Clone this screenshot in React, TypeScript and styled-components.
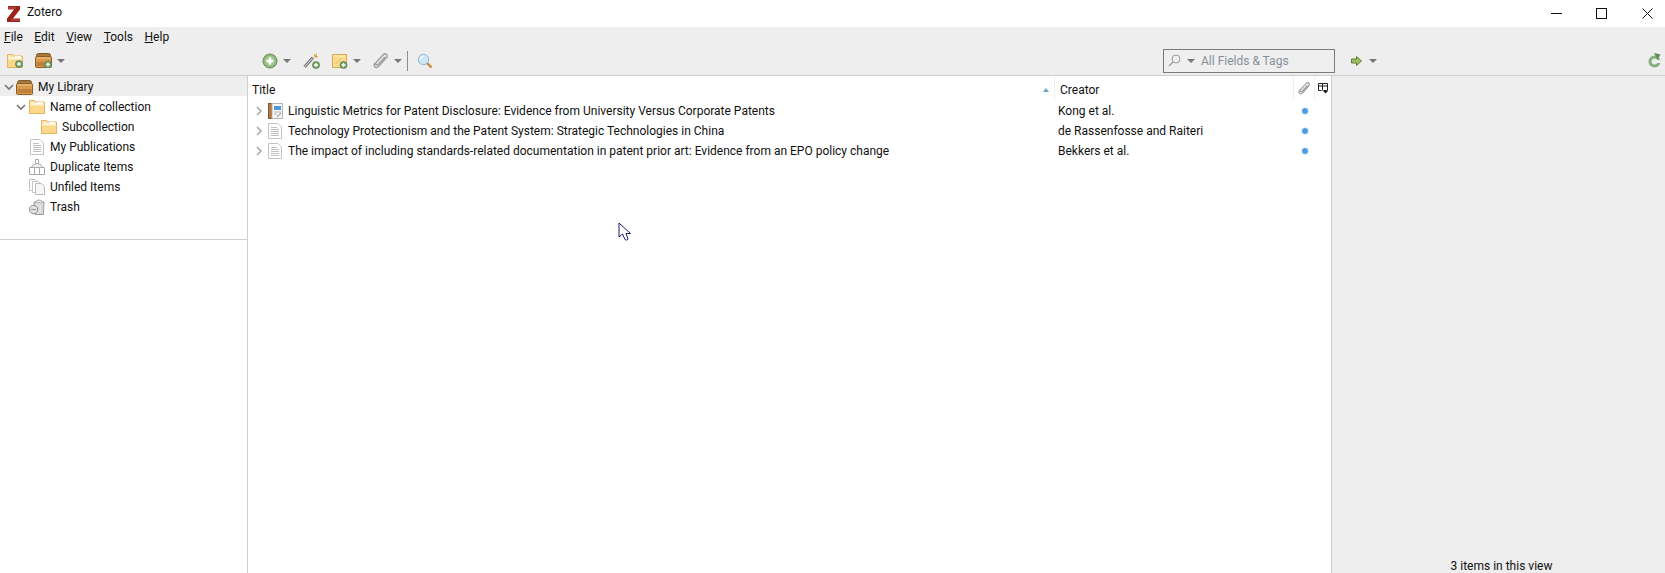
import React from 'react';
import styled, { createGlobalStyle } from 'styled-components';

const GlobalStyle = createGlobalStyle`
  html, body {
    margin: 0;
    padding: 0;
    height: 100%;
    overflow: hidden;
    background: #fff;
  }
  #root {
    height: 100%;
  }
`;

function ZoteroLogo() {
  return (
    <svg width="14" height="16" viewBox="0 0 14 16">
      <path d="M1 0h12v3.4L6 12.6h7V16H0v-3.4L7 3.4H1z" fill="#99231a" />
      <path d="M1 2h8M4 14h9" stroke="#c86a50" strokeWidth="0.8" />
    </svg>
  );
}

function Plus({ x = 10, y = 11 }: { x?: number; y?: number }) {
  return (
    <g>
      <circle cx={x} cy={y} r="3.6" fill="#6f9e5f" stroke="#55804a" strokeWidth="0.6" />
      <path d={`M${x - 2} ${y}h4M${x} ${y - 2}v4`} stroke="#fff" strokeWidth="1.3" />
    </g>
  );
}

function FolderIcon({ plus }: { plus?: boolean }) {
  return (
    <svg width="16" height="14" viewBox="0 0 16 14">
      <path d="M0.5 0.5h5l1 1.500h9v11.500h-15z" fill="#fbe6ae" stroke="#e6b562" />
      <path d="M1.500 4h13M8 2.800h6" stroke="#fff" strokeWidth="1.200" />
      <path d="M1 6h14v7H1z" fill="#fcd98a" />
      {plus && <Plus x={12} y={10} />}
    </svg>
  );
}

function LibraryIcon({ plus }: { plus?: boolean }) {
  return (
    <svg width="17" height="15" viewBox="0 0 17 15">
      <path d="M1.5 2.5q0-2 2-2h10q2 0 2 2v1h-14z" fill="#a87a3c" stroke="#7b5a2a" />
      <rect x="0.5" y="3.5" width="16" height="11" rx="1" fill="#d99a4e" stroke="#8a5f2b" />
      <path d="M1.5 5h14" stroke="#f0c88c" />
      <path d="M1.5 9h14v4h-14z" fill="#c27f3a" />
      {plus && <Plus x={13} y={11.5} />}
    </svg>
  );
}

function DocIcon() {
  return (
    <svg width="14" height="16" viewBox="0 0 14 16">
      <path d="M0.5 0.5h9.5l3.5 3.5v11.5h-13z" fill="#fff" stroke="#c4c4c4" />
      <path d="M3 4.5h6M3 6.5h8M3 8.5h8M3 10.5h8M3 12.5h8" stroke="#c0c0c0" />
    </svg>
  );
}

function BookIcon() {
  return (
    <svg width="15" height="16" viewBox="0 0 15 16">
      <rect x="0.5" y="0.5" width="3.500" height="15" fill="#b9763a" stroke="#7f5a33" />
      <rect x="4" y="0.5" width="10.500" height="15" fill="#f7f7f7" stroke="#b5b5b5" />
      <rect x="6" y="3" width="7" height="4" fill="#4f97dc" />
      <path d="M6 9h7M6 11h3" stroke="#b5b5b5" />
      <path d="M9 14l4-4" stroke="#a8a8a8" strokeWidth="1.200" />
    </svg>
  );
}

function DuplicateIcon() {
  return (
    <svg width="16" height="16" viewBox="0 0 16 16">
      <path d="M6.500 0.500h3v4h-3z" fill="#fff" stroke="#a9a9a9" />
      <path d="M2.500 8q1-3.500 5.500-3.500T13.500 8" fill="#eee" stroke="#a9a9a9" />
      <path d="M0.500 8.500h15v7h-15z" fill="#fff" stroke="#a9a9a9" />
      <path d="M5.500 8.500v7M10.500 8.500v7" stroke="#a9a9a9" />
    </svg>
  );
}

function UnfiledIcon() {
  return (
    <svg width="16" height="16" viewBox="0 0 16 16">
      <path d="M0.500 0.500h6l2 2v9h-8z" fill="#fff" stroke="#c4c4c4" />
      <path d="M3.500 2.500h6l2 2v9h-8z" fill="#fff" stroke="#c4c4c4" />
      <path d="M6.500 4.500h6l3 3v8h-9z" fill="#f6f6f6" stroke="#bcbcbc" />
    </svg>
  );
}

function TrashIcon() {
  return (
    <svg width="16" height="16" viewBox="0 0 16 16">
      <path d="M5 3h10l-0.600 12.500H6z" fill="#d9d9d9" stroke="#9a9a9a" />
      <path d="M6 3q4-4 8.500 0" fill="#eee" stroke="#a9a9a9" />
      <path d="M8 5v9M11 5v9" stroke="#eee" />
      <circle cx="4.500" cy="10.500" r="4.200" fill="#e2e2e2" stroke="#8e8e8e" />
      <path d="M2 10.500h5" stroke="#999" />
    </svg>
  );
}

function AddItemIcon() {
  return (
    <svg width="16" height="16" viewBox="0 0 16 16">
      <circle cx="8" cy="8" r="7" fill="#8db87c" stroke="#678f59" />
      <circle cx="8" cy="8" r="5" fill="#a5c996" />
      <path d="M4.500 8h7M8 4.500v7" stroke="#fff" strokeWidth="2.400" />
    </svg>
  );
}

function WandIcon() {
  return (
    <svg width="17" height="17" viewBox="0 0 17 17">
      <path d="M1.500 15L10 5.500" stroke="#777" strokeWidth="3" />
      <path d="M1.500 15L10 5.500" stroke="#ddd" strokeWidth="1" />
      <path d="M11 1l1 2 2-2-.5 3 2 .5-2.500 1.500-2-1.500z" fill="#e5a43c" />
      <Plus x={13} y={13} />
    </svg>
  );
}

function NoteIcon() {
  return (
    <svg width="16" height="16" viewBox="0 0 16 16">
      <path d="M0.500 1.500h14v9l-4 4h-10z" fill="#fbdc8c" stroke="#d8a94d" />
      <path d="M2 3h11" stroke="#fff0c4" />
      <path d="M3.500 11l6-6" stroke="#e3b659" />
      <Plus x={11.500} y={12} />
    </svg>
  );
}

function ClipIcon({ size = 16 }: { size?: number }) {
  return (
    <svg width={size} height={size} viewBox="0 0 16 16">
      <path
        d="M12 4L5.500 11q-1.500 1.500-2.500 .5t.5-2.500L10 2q2-2 3.500-.5t-.5 3.500L6 13q-2.500 2.500-4 1T2 10"
        fill="none"
        stroke="#a3a3a3"
        strokeWidth="1.600"
      />
    </svg>
  );
}

function LocateIcon() {
  return (
    <svg width="16" height="16" viewBox="0 0 16 16">
      <path d="M10 10l4.500 4.500" stroke="#c98a3a" strokeWidth="2.400" />
      <circle cx="6.500" cy="6.500" r="5.200" fill="#cfe6f5" stroke="#8fb7d2" />
      <path d="M3.500 6q.5-2.500 3-3" stroke="#fff" fill="none" strokeWidth="1.200" />
    </svg>
  );
}

function SearchGlass() {
  return (
    <svg width="13" height="13" viewBox="0 0 13 13">
      <circle cx="8" cy="5" r="4" fill="none" stroke="#9a9a9a" />
      <path d="M5 8L1 12" stroke="#9a9a9a" strokeWidth="1.200" />
    </svg>
  );
}

function GoIcon() {
  return (
    <svg width="11" height="10" viewBox="0 0 11 10">
      <path d="M0.500 3h5V0.500L10.500 5l-5 4.500V7h-5z" fill="#9fbf63" stroke="#5c7d33" />
    </svg>
  );
}

function SyncIcon() {
  return (
    <svg width="13" height="15" viewBox="0 0 13 15">
      <circle cx="6.500" cy="8.500" r="4.500" fill="none" stroke="#86ad7b" strokeWidth="3" />
      <path d="M7 7h6v3H7z" fill="#eeeeee" />
      <path d="M6 0l6.500 1.500-3 5z" fill="#5f8f55" />
    </svg>
  );
}

function ColumnPicker() {
  return (
    <svg width="11" height="11" viewBox="0 0 11 11">
      <path d="M0.500 0.500h9v7h-4M0.500 0.500v7h3M0.500 3h9M4.500 0.500v7" fill="none" stroke="#222" />
      <path d="M5 8h5l-2.500 2.500z" fill="#222" />
    </svg>
  );
}

function Chevron({ open, light }: { open?: boolean; light?: boolean }) {
  return (
    <svg width="10" height="10" viewBox="0 0 10 10">
      <path
        d={open ? 'M1 3l4 4 4-4' : 'M3 1l4 4-4 4'}
        fill="none"
        stroke={light ? '#a8a8a8' : '#777'}
        strokeWidth="1.600"
      />
    </svg>
  );
}

function App() {
  const menus = ['File', 'Edit', 'View', 'Tools', 'Help'];
  const items = [
    {
      title: 'Linguistic Metrics for Patent Disclosure: Evidence from University Versus Corporate Patents',
      creator: 'Kong et al.',
      icon: <BookIcon />,
    },
    {
      title: 'Technology Protectionism and the Patent System: Strategic Technologies in China',
      creator: 'de Rassenfosse and Raiteri',
      icon: <DocIcon />,
    },
    {
      title: 'The impact of including standards-related documentation in patent prior art: Evidence from an EPO policy change',
      creator: 'Bekkers et al.',
      icon: <DocIcon />,
    },
  ];

  return (
    <Window>
      <GlobalStyle />
      <TitleBar>
        <LogoWrap>
          <ZoteroLogo />
        </LogoWrap>
        <AppName>Zotero</AppName>
        <WindowControls>
          <WindowButton>
            <svg width="11" height="11" viewBox="0 0 11 11">
              <path d="M0 5.500h11" stroke="#111" />
            </svg>
          </WindowButton>
          <WindowButton>
            <svg width="11" height="11" viewBox="0 0 11 11">
              <rect x="0.500" y="0.500" width="10" height="10" fill="none" stroke="#111" />
            </svg>
          </WindowButton>
          <WindowButton>
            <svg width="11" height="11" viewBox="0 0 11 11">
              <path d="M0.500 0.500l10 10M10.500 0.500l-10 10" stroke="#111" />
            </svg>
          </WindowButton>
        </WindowControls>
      </TitleBar>

      <MenuBar>
        {menus.map((m) => (
          <MenuItem key={m}>
            <u>{m[0]}</u>
            {m.slice(1)}
          </MenuItem>
        ))}
      </MenuBar>

      <Toolbar>
        <LeftTools>
          <ToolButton>
            <FolderIcon plus />
          </ToolButton>
          <ToolButton>
            <LibraryIcon plus />
            <Caret />
          </ToolButton>
        </LeftTools>
        <MiddleTools>
          <ToolButton>
            <AddItemIcon />
            <Caret />
          </ToolButton>
          <ToolButton>
            <WandIcon />
          </ToolButton>
          <ToolButton>
            <NoteIcon />
            <Caret />
          </ToolButton>
          <ToolButton>
            <ClipIcon />
            <Caret />
          </ToolButton>
          <Separator />
          <ToolButton>
            <LocateIcon />
          </ToolButton>
        </MiddleTools>
        <SearchBox>
          <SearchGlass />
          <Caret />
          <SearchText>All Fields &amp; Tags</SearchText>
        </SearchBox>
        <GoButton>
          <GoIcon />
          <Caret />
        </GoButton>
        <SyncButton>
          <SyncIcon />
        </SyncButton>
      </Toolbar>

      <Panes>
        <Sidebar>
          <CollectionList>
            <CollectionRow $depth={0} $selected>
              <Twisty>
                <Chevron open />
              </Twisty>
              <RowIcon>
                <LibraryIcon />
              </RowIcon>
              My Library
            </CollectionRow>
            <CollectionRow $depth={1}>
              <Twisty>
                <Chevron open />
              </Twisty>
              <RowIcon>
                <FolderIcon />
              </RowIcon>
              Name of collection
            </CollectionRow>
            <CollectionRow $depth={2}>
              <Twisty />
              <RowIcon>
                <FolderIcon />
              </RowIcon>
              Subcollection
            </CollectionRow>
            <CollectionRow $depth={1}>
              <Twisty />
              <RowIcon>
                <DocIcon />
              </RowIcon>
              My Publications
            </CollectionRow>
            <CollectionRow $depth={1}>
              <Twisty />
              <RowIcon>
                <DuplicateIcon />
              </RowIcon>
              Duplicate Items
            </CollectionRow>
            <CollectionRow $depth={1}>
              <Twisty />
              <RowIcon>
                <UnfiledIcon />
              </RowIcon>
              Unfiled Items
            </CollectionRow>
            <CollectionRow $depth={1}>
              <Twisty />
              <RowIcon>
                <TrashIcon />
              </RowIcon>
              Trash
            </CollectionRow>
          </CollectionList>
        </Sidebar>

        <ItemsPane>
          <HeaderRow>
            <TitleHead>
              Title
              <SortArrow />
            </TitleHead>
            <CreatorHead>Creator</CreatorHead>
            <AttachHead>
              <ClipIcon size={13} />
            </AttachHead>
            <PickerHead>
              <ColumnPicker />
            </PickerHead>
          </HeaderRow>
          {items.map((item) => (
            <ItemRow key={item.title}>
              <TitleCell>
                <ItemTwisty>
                  <Chevron light />
                </ItemTwisty>
                <ItemIcon>{item.icon}</ItemIcon>
                {item.title}
              </TitleCell>
              <CreatorCell>{item.creator}</CreatorCell>
              <AttachCell>
                <Dot />
              </AttachCell>
            </ItemRow>
          ))}
          <Cursor>
            <svg width="14" height="20" viewBox="0 0 14 20">
              <path
                d="M1 1v14l3.500-3 2.500 5.500q1.500 1.500 3-.5L8 11.500h4.500z"
                fill="#fff"
                stroke="#1c1c6e"
                strokeWidth="1"
              />
            </svg>
          </Cursor>
        </ItemsPane>

        <DetailPane>
          <ItemCount>3 items in this view</ItemCount>
        </DetailPane>
      </Panes>
    </Window>
  );
}

export default App;

const Window = styled.div`
  width: 1665px;
  height: 573px;
  display: flex;
  flex-direction: column;
  overflow: hidden;
  background: #fff;
  color: #111;
  font-family: Roboto, 'Noto Sans', sans-serif;
  font-size: 12px;
`;

const TitleBar = styled.div`
  height: 27px;
  display: flex;
  align-items: center;
  background: #fff;
`;

const LogoWrap = styled.div`
  width: 27px;
  padding-left: 7px;
  padding-top: 1px;
  box-sizing: border-box;
  display: flex;
`;

const AppName = styled.span`
  margin-top: -3px;
`;

const WindowControls = styled.div`
  margin-left: auto;
  margin-right: -5px;
  display: flex;
`;

const WindowButton = styled.div`
  width: 45.500px;
  height: 24px;
  display: flex;
  align-items: center;
  justify-content: center;
`;

const MenuBar = styled.div`
  height: 22px;
  display: flex;
  align-items: center;
  gap: 11.500px;
  padding-left: 4px;
  padding-bottom: 2px;
  box-sizing: border-box;
  background: #eeeeee;
`;

const MenuItem = styled.span`
  font-size: 12px;
`;

const Toolbar = styled.div`
  height: 29px;
  margin-top: -3px;
  display: flex;
  align-items: center;
  background: #eeeeee;
  border-bottom: 1px solid #cfcfcf;
`;

const LeftTools = styled.div`
  width: 262px;
  flex: none;
  display: flex;
  align-items: center;
  gap: 12px;
  padding-left: 7px;
  box-sizing: border-box;
`;

const MiddleTools = styled.div`
  display: flex;
  align-items: center;
  gap: 12px;
`;

const ToolButton = styled.div`
  display: flex;
  align-items: center;
  gap: 5px;
`;

const Caret = styled.span`
  width: 0;
  height: 0;
  border-left: 4px solid transparent;
  border-right: 4px solid transparent;
  border-top: 4px solid #777;
`;

const Separator = styled.div`
  width: 1px;
  height: 20px;
  background: #8d8d8d;
  margin: 0 -3px 0 -7px;
`;

const SearchBox = styled.div`
  width: 172px;
  height: 24px;
  box-sizing: border-box;
  margin-left: auto;
  margin-right: 16px;
  display: flex;
  align-items: center;
  gap: 6px;
  padding-left: 4px;
  background: #efefef;
  border: 1px solid #7a7a7a;
`;

const SearchText = styled.span`
  color: #858f9a;
`;

const GoButton = styled.div`
  display: flex;
  align-items: center;
  gap: 7px;
  margin-right: 271px;
`;

const SyncButton = styled.div`
  width: 17px;
  display: flex;
`;

const Panes = styled.div`
  flex: 1;
  min-height: 0;
  display: flex;
`;

const Sidebar = styled.div`
  width: 247px;
  flex: none;
  border-right: 1px solid #cfcfcf;
`;

const CollectionList = styled.div`
  height: 163px;
  border-bottom: 1px solid #cfcfcf;
`;

const CollectionRow = styled.div<{ $depth: number; $selected?: boolean }>`
  height: 20px;
  box-sizing: border-box;
  padding-top: 2px;
  display: flex;
  align-items: center;
  padding-left: ${({ $depth }) => 4 + $depth * 12}px;
  background: ${({ $selected }) => ($selected ? '#eeeeee' : 'transparent')};
`;

const Twisty = styled.span`
  width: 12px;
  flex: none;
  display: flex;
`;

const RowIcon = styled.span`
  width: 17px;
  margin-right: 5px;
  flex: none;
  display: flex;
  justify-content: center;
`;

const ItemsPane = styled.div`
  position: relative;
  width: 1083px;
  flex: none;
  border-right: 1px solid #cfcfcf;
`;

const HeaderRow = styled.div`
  height: 24px;
  display: flex;
  align-items: center;
`;

const HeadCell = styled.div`
  height: 24px;
  box-sizing: border-box;
  display: flex;
  align-items: center;
  border-right: 1px solid #efefef;
`;

const TitleHead = styled(HeadCell)`
  width: 807px;
  padding: 3px 5px 0 4px;
  justify-content: space-between;
`;

const CreatorHead = styled(HeadCell)`
  width: 239px;
  padding: 3px 0 0 5px;
`;

const AttachHead = styled(HeadCell)`
  width: 21px;
  justify-content: center;
`;

const PickerHead = styled(HeadCell)`
  flex: 1;
  border-right: 0;
  justify-content: center;
`;

const SortArrow = styled.span`
  width: 0;
  height: 0;
  border-left: 3.500px solid transparent;
  border-right: 3.500px solid transparent;
  border-bottom: 4px solid #6ea3c4;
`;

const ItemRow = styled.div`
  height: 20px;
  box-sizing: border-box;
  padding-top: 2px;
  display: flex;
  align-items: center;
`;

const TitleCell = styled.div`
  width: 807px;
  flex: none;
  display: flex;
  align-items: center;
  white-space: nowrap;
`;

const ItemTwisty = styled.span`
  width: 12px;
  margin-left: 6px;
  flex: none;
  display: flex;
`;

const ItemIcon = styled.span`
  width: 16px;
  margin-left: 1px;
  margin-right: 5px;
  flex: none;
  display: flex;
  justify-content: center;
`;

const CreatorCell = styled.div`
  width: 239px;
  flex: none;
  box-sizing: border-box;
  padding-left: 3px;
`;

const AttachCell = styled.div`
  width: 21px;
  display: flex;
  justify-content: center;
`;

const Dot = styled.span`
  width: 6px;
  height: 6px;
  border-radius: 50%;
  background: radial-gradient(circle, #4d9be0 0 45%, #7fbdea 100%);
  box-shadow: 0 0 0 0.500px #b5d5ee;
`;

const Cursor = styled.div`
  position: absolute;
  left: 370px;
  top: 146px;
  line-height: 0;
`;

const DetailPane = styled.div`
  flex: 1;
  display: flex;
  align-items: flex-end;
  justify-content: center;
  padding-left: 6px;
  background: #eeeeee;
`;

const ItemCount = styled.div`
  margin-bottom: -2px;
  line-height: 18px;
`;
